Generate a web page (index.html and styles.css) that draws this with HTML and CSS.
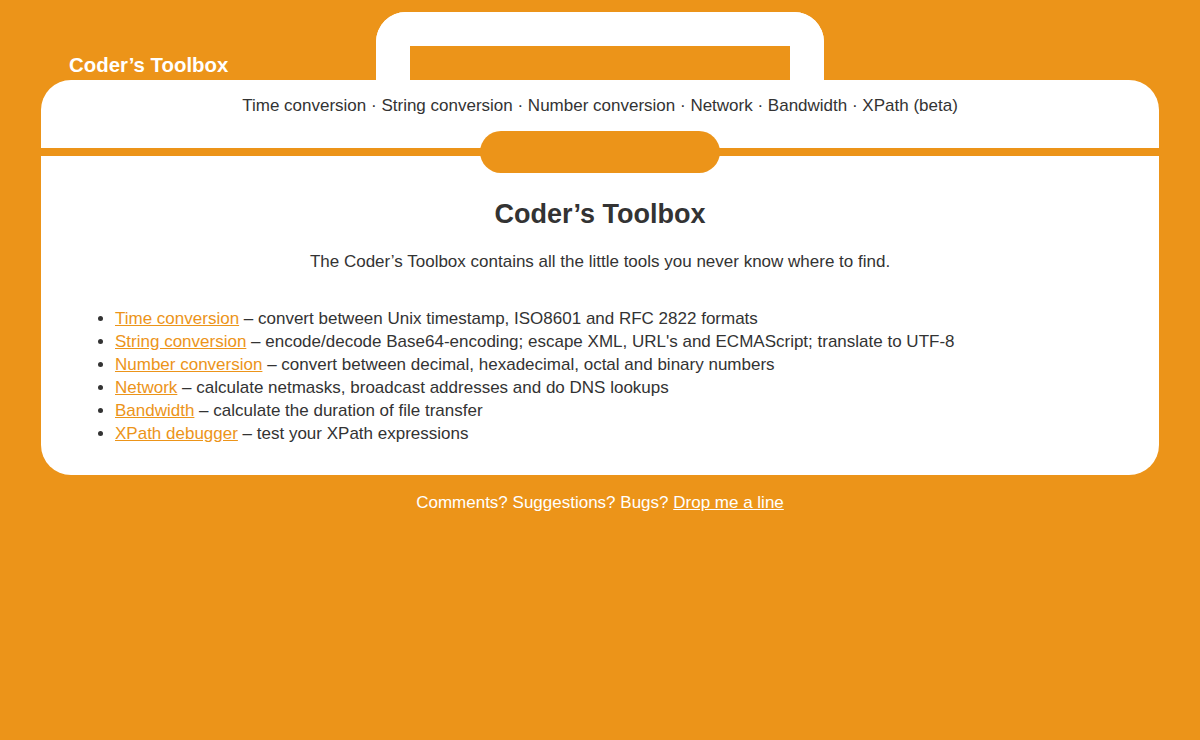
FILE: index.html
```html
<!DOCTYPE html>
<html>
<head>
<meta charset="utf-8">
<title>Coder’s Toolbox</title>
<link rel="stylesheet" href="styles.css">
</head>
<body>
<div class="page">
  <header class="top">
    <div class="brand">Coder’s Toolbox</div>
    <div class="handle"></div>
    <div class="spacer"></div>
  </header>
  <main class="box">
    <nav class="nav"><a href="#">Time conversion</a> · <a href="#">String conversion</a> · <a href="#">Number conversion</a> · <a href="#">Network</a> · <a href="#">Bandwidth</a> · <a href="#">XPath (beta)</a></nav>
    <div class="divider"><div class="pill"></div></div>
    <section class="content">
      <h1 class="title">Coder’s Toolbox</h1>
      <p class="intro">The Coder’s Toolbox contains all the little tools you never know where to find.</p>
      <ul class="tools">
        <li><a href="#">Time conversion</a> – convert between Unix timestamp, ISO8601 and RFC 2822 formats</li>
        <li><a href="#">String conversion</a> – encode/decode Base64-encoding; escape XML, URL's and ECMAScript; translate to UTF-8</li>
        <li><a href="#">Number conversion</a> – convert between decimal, hexadecimal, octal and binary numbers</li>
        <li><a href="#">Network</a> – calculate netmasks, broadcast addresses and do DNS lookups</li>
        <li><a href="#">Bandwidth</a> – calculate the duration of file transfer</li>
        <li><a href="#">XPath debugger</a> – test your XPath expressions</li>
      </ul>
    </section>
  </main>
  <footer class="foot">Comments? Suggestions? Bugs? <a href="#">Drop me a line</a></footer>
</div>
</body>
</html>
```

FILE: styles.css
```css
html, body {
  margin: 0;
  padding: 0;
  background: #ec9419;
}
body {
  font-family: "Liberation Sans", Arial, sans-serif;
  font-size: 17px;
  color: #333333;
}
.page {
  width: 1118px;
  margin: 0 auto;
  padding-top: 12px;
}
.top {
  display: grid;
  grid-template-columns: 1fr 448px 1fr;
  height: 68px;
}
.brand {
  align-self: end;
  padding-left: 28px;
  padding-bottom: 3px;
  color: #ffffff;
  font-weight: bold;
  font-size: 20.4px;
  line-height: 24px;
}
.handle {
  box-sizing: border-box;
  height: 68px;
  border: 34px solid #ffffff;
  border-bottom: 0;
  border-radius: 30px 30px 0 0;
}
.box {
  display: block;
  background: #ffffff;
  border-radius: 30px;
}
.nav {
  box-sizing: border-box;
  height: 68px;
  padding-top: 14px;
  text-align: center;
  line-height: 23px;
}
.nav a {
  color: #333333;
  text-decoration: none;
}
.divider {
  height: 8px;
  background: #ec9419;
  display: flex;
  align-items: center;
  justify-content: center;
}
.pill {
  flex: none;
  width: 240px;
  height: 42px;
  background: #ec9419;
  border-radius: 21px;
}
.content {
  padding: 43px 34px 30px;
}
.title {
  margin: 0;
  text-align: center;
  font-size: 27px;
  line-height: 30px;
  font-weight: bold;
}
.intro {
  margin: 21px 0 0;
  text-align: center;
  line-height: 23px;
}
.tools {
  margin: 34px 0 0;
  padding-left: 40px;
  line-height: 23px;
}
.tools a {
  color: #ec9419;
  text-decoration: underline;
}
.foot {
  margin-top: 16px;
  text-align: center;
  color: #ffffff;
  line-height: 23px;
}
.foot a {
  color: #ffffff;
  text-decoration: underline;
}
```
